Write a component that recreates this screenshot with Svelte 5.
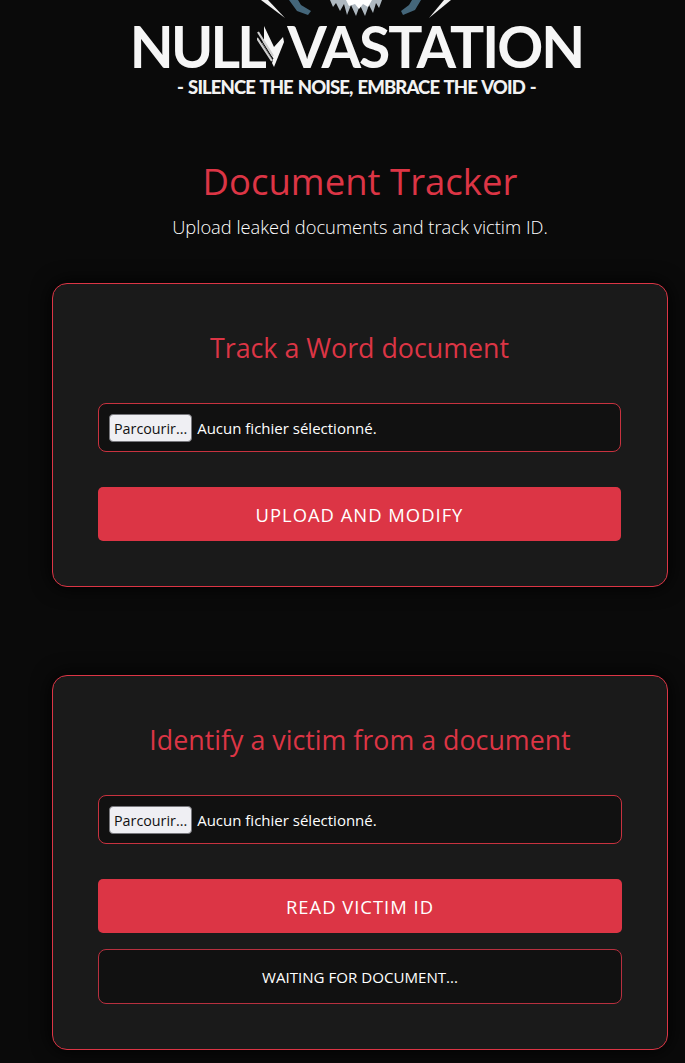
<script>
  const cards = [
    { title: 'Track a Word document', action: 'Upload and modify', status: null },
    { title: 'Identify a victim from a document', action: 'Read victim ID', status: 'Waiting for document...' }
  ];
</script>

<main class="page">
  <header class="logo">
    <svg class="crest" width="320" height="20" viewBox="196 0 320 20" aria-hidden="true">
      <path d="M260 0 L284 18 L267 0Z" fill="#f2f2f2" />
      <path d="M450 0 L428 18 L443 0Z" fill="#f2f2f2" />
      <path d="M288 0 L297 0 L300 5 L310 11 L307 15 L296 11Z" fill="#44667a" />
      <path d="M420 0 L411 0 L408 5 L400 11 L402 15 L414 10Z" fill="#44667a" />
      <path d="M329 0 L332 7 L335 3 L339 11 L343 4 L346 15 L350 5 L355 16 L359 5 L364 16 L368 5 L372 13 L375 3 L378 8 L381 0Z" fill="#aeb8c0" />
      <path d="M345 0 L348 6 L354 4 L358 9 L362 4 L367 7 L371 0Z" fill="#fff" />
    </svg>
    <div class="wordmark">
      <span class="null">NULL</span>
      <svg class="mark" width="30" height="42" viewBox="0 0 30 42" aria-hidden="true">
        <path d="M7 0 L17 21 L26 11 L27 16 L17 41 L15 37 L16 34 L5 17 L7 13Z" fill="#f6f6f6" />
        <path d="M1 9 L16 33 M1 14 L14 37 M2 19 L12 37" stroke="#0a0a0a" stroke-width="1.3" fill="none" />
        <path d="M1 6 L16 30 M0 12 L15 35" stroke="#cfcfcf" stroke-width="2.2" fill="none" />
      </svg>
      <span>VASTATION</span>
    </div>
    <div class="tagline">- SILENCE THE NOISE, EMBRACE THE VOID -</div>
  </header>

  <h1>Document Tracker</h1>
  <p class="lead">Upload leaked documents and track victim ID.</p>

  {#each cards as card}
    <section class="card">
      <h2>{card.title}</h2>
      <div class="file">
        <span class="browse">Parcourir...</span>
        <span>Aucun fichier sélectionné.</span>
      </div>
      <button class="action">{card.action}</button>
      {#if card.status}
        <div class="status">{card.status}</div>
      {/if}
    </section>
  {/each}
</main>

<style>
  :global(body) {
    background: #0a0a0a;
    font-family: "Open Sans", "Noto Sans", sans-serif;
    color: #fff;
    overflow: hidden;
  }

  .page {
    height: 1063px;
    padding: 0 17px 0 52px;
    box-sizing: border-box;
    text-align: center;
    overflow: hidden;
  }

  .logo {
    display: flex;
    flex-direction: column;
    align-items: center;
    height: 156px;
    margin-left: -52px;
    margin-right: -17px;
    padding-left: 28px;
    box-sizing: border-box;
  }

  .crest { display: block; height: 20px; flex: none; }

  .wordmark {
    display: flex;
    font: 700 57px/50px Lato, sans-serif;
    letter-spacing: -2px;
    color: #f6f6f6;
    white-space: nowrap;
    margin-top: 1px;
  }

  .null { letter-spacing: -2.8px; }

  .mark { flex: none; margin: 5px 0 0 -7px; }

  .tagline {
    font: 900 18.5px/20px Lato, sans-serif;
    letter-spacing: -0.9px;
    word-spacing: 1.5px;
    color: #f2f2f2;
    margin-top: 6px;
    white-space: nowrap;
  }

  h1 {
    margin: 0;
    font-size: 36.5px;
    line-height: 50px;
    font-weight: 400;
    color: #dc3545;
  }

  .lead {
    margin: 7px 0 43px;
    font-size: 18.3px;
    line-height: 27px;
    font-weight: 300;
  }

  .card {
    background: #1a1a1a;
    border: 1px solid #dc3545;
    border-radius: 15px;
    padding: 45px;
    margin-bottom: 88px;
    height: 304px;
    box-sizing: border-box;
    box-shadow: 0 0 20px #000;
  }

  .card:first-of-type { padding-right: 46px; }

  .card:last-child { height: 375px; margin: 0; }

  h2 {
    margin: 0 0 36px;
    font-size: 26.8px;
    line-height: 38px;
    font-weight: 400;
    color: #dc3545;
  }

  .file {
    display: flex;
    align-items: center;
    gap: 5px;
    height: 49px;
    padding: 0 10px;
    box-sizing: border-box;
    background: #111;
    border: 1px solid #c8323f;
    border-radius: 8px;
    font-size: 15px;
    text-align: left;
  }

  .browse {
    display: block;
    height: 28px;
    padding: 0 4px;
    line-height: 27px;
    font-size: 14.3px;
    box-sizing: border-box;
    color: #111;
    background: #efeff3;
    border: 1px solid #77777c;
    border-radius: 4px;
  }

  .action {
    display: block;
    width: 100%;
    height: 54px;
    margin-top: 35px;
    border: 0;
    border-radius: 5px;
    background: #dc3545;
    color: #fff;
    font: 400 18.4px "Open Sans", sans-serif;
    letter-spacing: 1px;
    text-transform: uppercase;
  }

  .status {
    height: 55px;
    margin-top: 16px;
    box-sizing: border-box;
    line-height: 54px;
    background: #111;
    border: 1px solid #b8303f;
    border-radius: 8px;
    font-size: 15.1px;
    text-transform: uppercase;
  }
</style>
